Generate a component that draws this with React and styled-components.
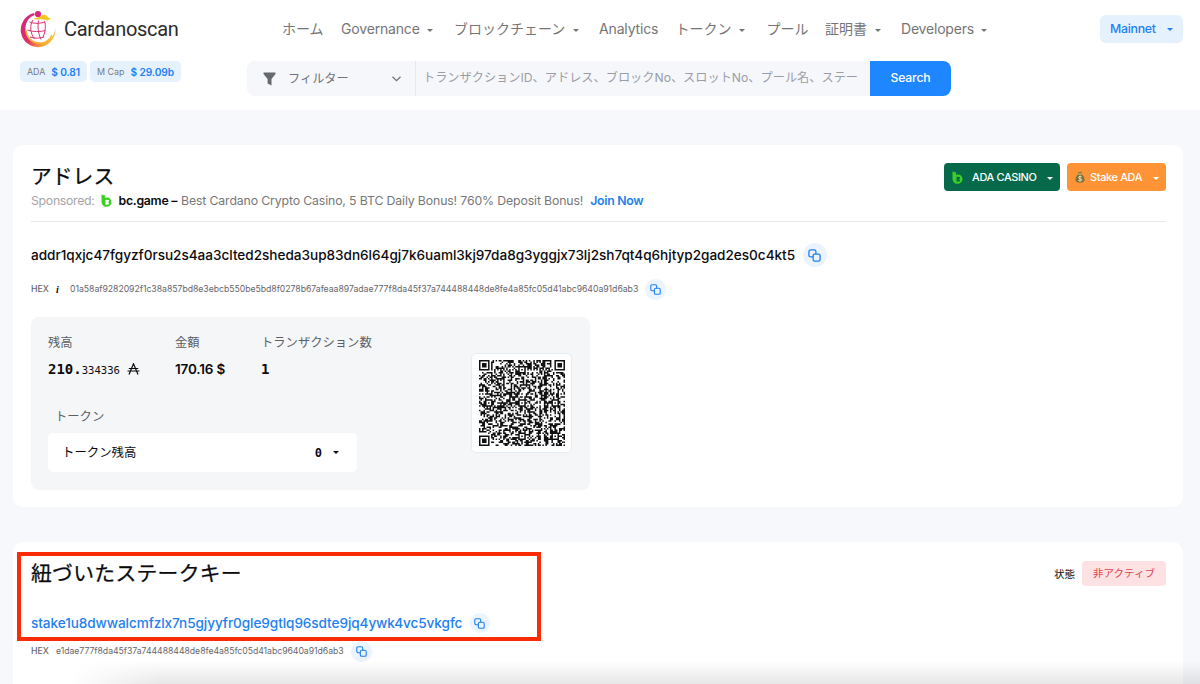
import React from 'react'
import styled, { createGlobalStyle, css } from 'styled-components'

const GlobalStyle = createGlobalStyle`
  * {
    box-sizing: border-box;
  }
  body {
    margin: 0;
    height: 684px;
    overflow: hidden;
    background: #f6f8fb;
    color: #0b0b0f;
    font-family: Inter, 'Noto Sans CJK JP', sans-serif;
    font-size: 14px;
  }
`

const Page = styled.div`
  position: relative;
  height: 684px;
  overflow: hidden;
`

const Header = styled.header`
  height: 110px;
  padding: 0 17px 0 20px;
  background: #ffffff;
`

const TopBar = styled.div`
  display: flex;
  align-items: center;
  height: 58px;
`

const Brand = styled.a`
  display: flex;
  align-items: center;
  gap: 7px;
  width: 262px;
  font-family: Roboto, sans-serif;
  font-size: 20px;
  letter-spacing: -.3px;
  color: #2b2b2d;
`

const Nav = styled.nav`
  display: grid;
  grid-template-columns: 59px 113px 145px 76.5px 91px 58.5px 76px 90px;
  flex: 1;
  color: #757575;
`

const NavItem = styled.a`
  display: flex;
  align-items: center;
  gap: 7.5px;
  line-height: 20px;
  white-space: nowrap;
  letter-spacing: ${props => props.$spacing || 0}px;
`

const Caret = styled.i`
  border: 3px solid transparent;
  border-top-color: currentColor;
  border-bottom: 0;
  margin-top: 2px;
`

const Network = styled.button`
  display: flex;
  align-items: center;
  justify-content: space-between;
  width: 83px;
  height: 28px;
  padding: 0 10px 1px;
  border: 0;
  border-radius: 6px;
  background: #e6f1fe;
  color: #2180f3;
  font: 500 12.3px Inter, sans-serif;
  letter-spacing: -.25px;
`

const SubBar = styled.div`
  display: flex;
  align-items: flex-start;
  padding-top: 3px;
`

const Chips = styled.div`
  display: flex;
  gap: 3px;
  width: 227px;
`

const Chip = styled.div`
  display: flex;
  align-items: center;
  justify-content: space-between;
  width: ${props => props.$width}px;
  height: 21px;
  padding: 0 7px;
  border-radius: 5px;
  background: #e6f1fe;
  color: #767b83;
  font-size: 8.9px;
  white-space: nowrap;
  b {
    color: #2180f3;
    font-size: 10.2px;
    font-weight: 600;
    letter-spacing: -.1px;
  }
`

const SearchForm = styled.form`
  display: flex;
  width: 704px;
  height: 35px;
  border-radius: 8px;
  overflow: hidden;
  background: #f6f7fa;
  font-size: 12.2px;
  line-height: 34px;
`

const Filter = styled.div`
  display: flex;
  align-items: center;
  width: 169px;
  padding: 0 14px 0 16px;
  border-right: 1px solid #e6e8ec;
  color: #707378;
  span {
    flex: 1;
    padding-left: 12px;
  }
`

const Placeholder = styled.div`
  flex: 1;
  padding-left: 7px;
  white-space: nowrap;
  color: #9a9da8;
`

const SearchButton = styled.button`
  width: 81px;
  padding-bottom: 3px;
  border: 0;
  background: #1e87ff;
  color: #ffffff;
  font: 500 12.2px Inter, sans-serif;
  letter-spacing: -.15px;
`

const Card = styled.section`
  height: ${props => props.$height}px;
  margin: 35px 17px 0 13px;
  padding: 17px 17px 0 18px;
  border-radius: 10px;
  background: #ffffff;
`

const CardHead = styled.div`
  display: flex;
  justify-content: space-between;
  align-items: flex-start;
`

const AddressHead = styled(CardHead)`
  height: 60px;
  border-bottom: 1px solid #e7e7e9;
`

const Title = styled.h1`
  margin: 0;
  font-size: 20.8px;
  font-weight: 400;
  line-height: 30px;
  height: 28px;
  letter-spacing: ${props => props.$spacing || 0}px;
  -webkit-text-stroke: .25px currentColor;
`

const Sponsor = styled.div`
  display: flex;
  align-items: center;
  height: 21px;
  font-size: 12.3px;
  letter-spacing: -.14px;
  white-space: pre;
  color: #777777;
  svg {
    margin: 0 7px 0 6px;
  }
`

const Muted = styled.span`
  letter-spacing: -.3px;
  color: #a5a5a7;
`

const Strong = styled.b`
  margin-right: 4px;
  color: #0b0b0f;
  font-weight: 600;
  letter-spacing: -.3px;
`

const Join = styled.a`
  margin-left: 7px;
  color: #1e80f0;
  font-weight: 600;
  letter-spacing: -.3px;
`

const Actions = styled.div`
  display: flex;
  gap: 7px;
`

const Action = styled.button`
  display: flex;
  align-items: center;
  width: ${props => props.$width}px;
  height: 28px;
  margin-top: 1px;
  padding: 0 7px 0 8px;
  border: 0;
  border-radius: 4px;
  background: ${props => props.$color};
  color: #ffffff;
  font: 500 10.9px Inter, sans-serif;
  letter-spacing: -.33px;
  white-space: nowrap;
  span {
    flex: 1;
    text-align: left;
    padding-left: ${props => props.$gap}px;
  }
`

const AddressRow = styled.div`
  display: flex;
  align-items: center;
  gap: 7.5px;
  height: 28px;
  margin-top: ${props => props.$top}px;
  font-size: 13.6px;
  font-weight: 500;
  white-space: nowrap;
  ${props => props.$link && css`
    color: #1e80f0;
  `}
`

const Hash = styled.span`
  letter-spacing: ${props => props.$spacing}px;
`

const HexRow = styled.div`
  display: flex;
  align-items: center;
  height: 22px;
  margin-top: ${props => props.$top}px;
  font-size: 8.7px;
  color: #66666a;
  white-space: nowrap;
`

const HexLabel = styled.span`
  width: ${props => props.$width}px;
  font-weight: 500;
`

const Info = styled.i`
  width: 14px;
  color: #0b0b0f;
  font: italic bold 10px 'Liberation Serif', serif;
`

const CopyButton = styled.button`
  display: grid;
  place-items: center;
  width: ${props => props.$size}px;
  height: ${props => props.$size}px;
  padding: 0;
  border: 0;
  border-radius: 50%;
  background: #eaf3fe;
  color: #1e80f0;
`

const HexCopy = styled(CopyButton)`
  margin-left: 7px;
`

const Panel = styled.div`
  display: flex;
  justify-content: space-between;
  width: 559px;
  height: 173px;
  margin-top: 17px;
  padding: 15px 18px 0 17px;
  border-radius: 8px;
  background: #f5f6f8;
`

const Stats = styled.div`
  display: grid;
  grid-template-columns: 127px 86px 120px;
`

const Label = styled.div`
  height: 20px;
  line-height: 22px;
  font-size: 12.3px;
  color: #5c5e63;
  white-space: nowrap;
`

const Value = styled.div`
  height: 20px;
  margin-top: 7px;
  line-height: 20px;
  font-size: 13.5px;
  font-weight: 600;
  letter-spacing: -.15px;
  white-space: nowrap;
`

const Mono = styled(Value)`
  display: flex;
  align-items: center;
  font-family: 'DejaVu Sans Mono', monospace;
  font-size: 14px;
  font-weight: 700;
  letter-spacing: 0;
  small {
    padding-top: 2px;
    font-size: 10.6px;
    font-weight: 400;
  }
  svg {
    margin-left: 7px;
  }
`

const TokenLabel = styled(Label)`
  margin: 27px 0 7px 7px;
`

const TokenSelect = styled.div`
  display: flex;
  align-items: center;
  width: 309px;
  height: 39px;
  padding: 0 18px 2px 14px;
  border-radius: 5px;
  background: #ffffff;
  font-size: 12.4px;
  span {
    flex: 1;
  }
  b {
    padding: 3px 11px 0 0;
    font: bold 12px 'DejaVu Sans Mono', monospace;
  }
`

const QrBox = styled.div`
  display: grid;
  place-items: center;
  width: 101px;
  height: 100px;
  margin-top: 21px;
  border: 1px solid #e3edf6;
  border-radius: 5px;
  background: #ffffff;
`

const Status = styled.div`
  display: flex;
  align-items: center;
  gap: 7px;
  height: 25px;
  margin-top: 2px;
  font-size: 10.5px;
`

const Badge = styled.span`
  width: 84px;
  height: 25px;
  border-radius: 4px;
  background: #fee1e3;
  color: #dc4450;
  line-height: 25px;
  text-align: center;
`

const Highlight = styled.div`
  position: absolute;
  left: 17px;
  top: 552px;
  width: 524px;
  height: 89px;
  border: 4px solid #f92c06;
`

const BottomShade = styled.div`
  position: absolute;
  left: 70px;
  right: 0;
  bottom: 0;
  height: 24px;
  background: linear-gradient(to bottom, rgba(0, 0, 0, 0), rgba(0, 0, 0, .09));
  mask-image: linear-gradient(to right, transparent, black 90px);
`

const ADDRESS = 'addr1qxjc47fgyzf0rsu2s4aa3clted2sheda3up83dn6l64gj7k6uaml3kj97da8g3yggjx73lj2sh7qt4q6hjtyp2gad2es0c4kt5'
const ADDRESS_HEX = '01a58af9282092f1c38a857bd8e3ebcb550be5bd8f0278b67afeaa897adae777f8da45f37a744488448de8fe4a85fc05d41abc9640a91d6ab3'
const STAKE = 'stake1u8dwwalcmfzlx7n5gjyyfr0gle9gtlq96sdte9jq4ywk4vc5vkgfc'
const STAKE_HEX = 'e1dae777f8da45f37a744488448de8fe4a85fc05d41abc9640a91d6ab3'

const NAV = [
  { text: 'ホーム' },
  { text: 'Governance', menu: true, spacing: -.17 },
  { text: 'ブロックチェーン', menu: true },
  { text: 'Analytics', spacing: -.15 },
  { text: 'トークン', menu: true },
  { text: 'プール' },
  { text: '証明書', menu: true },
  { text: 'Developers', menu: true, spacing: -.2 }
]

// QR code, version 10, error correction level H
const QR_SIZE = 57
const QR_MASK = 1
const MASKS = [
  (r, c) => (r + c) % 2,
  (r) => r % 2,
  (r, c) => c % 3,
  (r, c) => (r + c) % 3,
  (r, c) => (Math.floor(r / 2) + Math.floor(c / 3)) % 2,
  (r, c) => (r * c) % 2 + (r * c) % 3,
  (r, c) => ((r * c) % 2 + (r * c) % 3) % 2,
  (r, c) => ((r + c) % 2 + (r * c) % 3) % 2
]

const multiply = (x, y) => {
  let z = 0
  for (let i = 7; i >= 0; i--) {
    z = (z << 1) ^ ((z >>> 7) * 0x11d)
    z ^= ((y >>> i) & 1) * x
  }
  return z
}

const generator = (degree) => {
  const result = Array(degree).fill(0)
  result[degree - 1] = 1
  let root = 1
  for (let i = 0; i < degree; i++) {
    for (let j = 0; j < degree; j++) {
      result[j] = multiply(result[j], root)
      if (j + 1 < degree) result[j] ^= result[j + 1]
    }
    root = multiply(root, 2)
  }
  return result
}

const errorWords = (data, divisor) => {
  const result = divisor.map(() => 0)
  data.forEach(byte => {
    const factor = byte ^ result.shift()
    result.push(0)
    divisor.forEach((coef, i) => { result[i] ^= multiply(coef, factor) })
  })
  return result
}

const codewords = (text) => {
  let bits = '0100' + text.length.toString(2).padStart(16, '0')
  for (const ch of text) bits += ch.charCodeAt(0).toString(2).padStart(8, '0')
  bits += '0000'
  const data = bits.match(/.{8}/g).map(b => parseInt(b, 2))
  for (let pad = 0xec; data.length < 122; pad ^= 0xec ^ 0x11) data.push(pad)

  const divisor = generator(28)
  const blocks = [15, 15, 15, 15, 15, 15, 16, 16].map(n => data.splice(0, n))
  const errors = blocks.map(block => errorWords(block, divisor))
  const result = []
  for (let i = 0; i < 16; i++) blocks.forEach(b => i < b.length && result.push(b[i]))
  for (let i = 0; i < 28; i++) errors.forEach(e => result.push(e[i]))
  return result
}

const buildQr = (text, mask) => {
  const grid = Array.from({ length: QR_SIZE }, () => Array(QR_SIZE).fill(null))
  const set = (r, c, dark) => {
    if (r >= 0 && c >= 0 && r < QR_SIZE && c < QR_SIZE) grid[r][c] = dark ? 1 : 0
  }
  for (let i = 0; i < QR_SIZE; i++) {
    set(6, i, i % 2 === 0)
    set(i, 6, i % 2 === 0)
  }
  for (const [y, x] of [[3, 3], [3, 53], [53, 3]]) {
    for (let dy = -4; dy <= 4; dy++) {
      for (let dx = -4; dx <= 4; dx++) {
        const d = Math.max(Math.abs(dy), Math.abs(dx))
        set(y + dy, x + dx, d !== 2 && d !== 4)
      }
    }
  }
  for (const [y, x] of [[6, 28], [28, 6], [28, 28], [28, 50], [50, 28], [50, 50]]) {
    for (let dy = -2; dy <= 2; dy++) {
      for (let dx = -2; dx <= 2; dx++) set(y + dy, x + dx, Math.max(Math.abs(dy), Math.abs(dx)) !== 1)
    }
  }

  const format = (2 << 3) | mask
  let rem = format
  for (let i = 0; i < 10; i++) rem = (rem << 1) ^ ((rem >>> 9) * 0x537)
  const info = ((format << 10) | rem) ^ 0x5412
  const bit = i => (info >>> i) & 1
  for (let i = 0; i < 6; i++) set(i, 8, bit(i))
  set(7, 8, bit(6))
  set(8, 8, bit(7))
  set(8, 7, bit(8))
  for (let i = 9; i < 15; i++) set(8, 14 - i, bit(i))
  for (let i = 0; i < 8; i++) set(8, QR_SIZE - 1 - i, bit(i))
  for (let i = 8; i < 15; i++) set(QR_SIZE - 15 + i, 8, bit(i))
  set(QR_SIZE - 8, 8, 1)
  for (let i = 0; i < 18; i++) {
    const dark = (0x0a4d3 >>> i) & 1
    const a = QR_SIZE - 11 + i % 3
    const b = Math.floor(i / 3)
    set(a, b, dark)
    set(b, a, dark)
  }

  const words = codewords(text)
  let i = 0
  for (let right = QR_SIZE - 1; right >= 1; right -= 2) {
    if (right === 6) right = 5
    for (let v = 0; v < QR_SIZE; v++) {
      for (let j = 0; j < 2; j++) {
        const c = right - j
        const r = ((right + 1) & 2) === 0 ? QR_SIZE - 1 - v : v
        if (grid[r][c] === null) {
          const dark = i < words.length * 8 ? (words[i >>> 3] >>> (7 - (i & 7))) & 1 : 0
          grid[r][c] = dark ^ (MASKS[mask](r, c) === 0 ? 1 : 0)
          i++
        }
      }
    }
  }
  return grid
}

const QrCode = ({ text }) => {
  const path = buildQr(text, QR_MASK)
    .flatMap((row, r) => row.map((dark, c) => dark ? `M${c} ${r}h1v1h-1z` : ''))
    .join('')
  return (
    <svg width='86' height='86' viewBox='0 0 57 57'>
      <path d={path} fill='#111' />
    </svg>
  )
}

const Logo = () => (
  <svg width='37' height='38' viewBox='0 0 37 38' fill='none'>
    <defs>
      <linearGradient id='ring' x1='4' y1='8' x2='34' y2='28' gradientUnits='userSpaceOnUse'>
        <stop offset='0' stopColor='#d5277e' />
        <stop offset='.45' stopColor='#e02f6c' />
        <stop offset='.8' stopColor='#f59a35' />
        <stop offset='1' stopColor='#f8c13c' />
      </linearGradient>
    </defs>
    <path d='M14 3A17.300 17.300 0 1 0 35.300 18.500C34.500 27 28 32.800 20.500 32.600C11.500 32.300 5.500 26.500 5.500 18.500C5.500 12 9 7 14.800 5z' fill='url(#ring)' />
    <path d='M6 20A13.500 13.500 0 0 0 32 25' stroke='#f9b52f' strokeWidth='1.400' />
    <path d='M20 6.500C23 3.500 26.500 4.500 28 7.500L31 8.500L27.500 10.500C24.500 9.500 22 9 19.500 9.500L13 9z' fill='#f9c51d' />
    <path d='M9.500 12C14 13.800 20 13.800 25 12M7.500 20C13 22 20 22 25.500 20.500M10 27C15 28.500 20 28.500 24 27M13 10C9.500 15 10 23 14.500 29M18.500 10.500C17.500 16 18 23 21 29.500M24.500 11C26 15 25.500 22 23 27' stroke='#dd3275' strokeWidth='1' />
    <circle cx='18' cy='4' r='3.100' fill='#d5277e' />
  </svg>
)

const BcIcon = ({ width = 11 }) => (
  <svg width={width} height={width * 13 / 11} viewBox='0 0 11 13'>
    <path d='M.5.5L4 1.500V4C7 2.500 10.500 4.500 10.500 8C10.500 11 8 12.800 5.500 12.800C2.500 12.800.5 10.500.5 7.500zM4.500 5.800V10.700L8 10.200V8.900L6.700 8.300L8 7.600V6z' fill='#3bd023' fillRule='evenodd' />
  </svg>
)

const CopyIcon = ({ size }) => (
  <svg width={size} height={size} viewBox='0 0 14 14' fill='none' stroke='currentColor' strokeWidth='1.400'>
    <rect x='5.500' y='5.500' width='7.500' height='7.500' rx='1.700' />
    <path d='M5.500 8.500H2.700A1.700 1.700 0 0 1 1 6.800V2.700A1.700 1.700 0 0 1 2.700 1H6.800A1.700 1.700 0 0 1 8.500 2.700V5.500' />
  </svg>
)

const FilterIcon = () => (
  <svg width='13' height='14' viewBox='0 0 13 14'>
    <path d='M.7.500H12.300Q13 1.300 12.300 2.200L8.500 7V13.500L4.600 11.500V7L.7 2.200Q0 1.300.7.500z' fill='#66696e' />
  </svg>
)

const Chevron = () => (
  <svg width='9' height='6' viewBox='0 0 9 6' fill='none' stroke='#707378' strokeWidth='1.300'>
    <path d='M.5.700L4.500 4.700L8.500.700' />
  </svg>
)

const AdaIcon = () => (
  <svg width='13' height='12' viewBox='0 0 13 12' fill='none' stroke='#0b0b0f' strokeWidth='1.200'>
    <path d='M2 11.500L6.500 .8L11 11.500M1.800 5.500H11.200M.5 8H12.500' />
  </svg>
)

const MoneyBag = () => (
  <svg width='10' height='12' viewBox='0 0 10 12'>
    <path d='M3 .7L5 1.300L7 .5L6.300 3C8.500 4.500 9.800 7 9.500 9.300Q9.300 11.700 5 11.700Q.7 11.700.5 9.300C.2 7 1.500 4.500 3.700 3z' fill='#7d7340' />
    <path d='M3.500 3H6.500' stroke='#e5c878' />
    <path d='M6.600 5.800C5.500 5 3.600 5.300 3.600 6.500S6.600 7.500 6.600 8.800S4.500 10.200 3.300 9.300M5 4.700V10.500' fill='none' stroke='#f7e9b8' strokeWidth='.9' />
  </svg>
)

const App = () => (
  <Page>
    <GlobalStyle />
    <Header>
      <TopBar>
        <Brand><Logo />Cardanoscan</Brand>
        <Nav>
          {NAV.map(item => (
            <NavItem key={item.text} $spacing={item.spacing}>
              {item.text}
              {item.menu && <Caret />}
            </NavItem>
          ))}
        </Nav>
        <Network>Mainnet<Caret /></Network>
      </TopBar>
      <SubBar>
        <Chips>
          <Chip $width={67}>ADA <b>$ 0.81</b></Chip>
          <Chip $width={91}>M Cap <b>$ 29.09b</b></Chip>
        </Chips>
        <SearchForm>
          <Filter><FilterIcon /><span>フィルター</span><Chevron /></Filter>
          <Placeholder>トランザクションID、アドレス、ブロックNo、スロットNo、プール名、ステー</Placeholder>
          <SearchButton type='button'>Search</SearchButton>
        </SearchForm>
      </SubBar>
    </Header>

    <Card $height={362}>
      <AddressHead>
        <div>
          <Title>アドレス</Title>
          <Sponsor>
            <Muted>Sponsored:</Muted>
            <BcIcon />
            <Strong>bc.game –</Strong>
            <span>Best Cardano Crypto Casino, 5 BTC Daily Bonus! 760% Deposit Bonus!</span>
            <Join>Join Now</Join>
          </Sponsor>
        </div>
        <Actions>
          <Action $width={116} $gap={9} $color='#05694a'><BcIcon /><span>ADA CASINO</span><Caret /></Action>
          <Action $width={99} $gap={5} $color='#ff9436'><MoneyBag /><span>Stake ADA</span><Caret /></Action>
        </Actions>
      </AddressHead>
      <AddressRow $top={19}>
        <Hash $spacing={-.03}>{ADDRESS}</Hash>
        <CopyButton $size={24}><CopyIcon size={13} /></CopyButton>
      </AddressRow>
      <HexRow $top={9}>
        <HexLabel $width={25}>HEX</HexLabel>
        <Info>i</Info>
        <Hash $spacing={-.03}>{ADDRESS_HEX}</Hash>
        <HexCopy $size={21}><CopyIcon size={11} /></HexCopy>
      </HexRow>
      <Panel>
        <div>
          <Stats>
            <div>
              <Label>残高</Label>
              <Mono>210.<small>334336</small><AdaIcon /></Mono>
            </div>
            <div>
              <Label>金額</Label>
              <Value>170.16 $</Value>
            </div>
            <div>
              <Label>トランザクション数</Label>
              <Mono>1</Mono>
            </div>
          </Stats>
          <TokenLabel>トークン</TokenLabel>
          <TokenSelect><span>トークン残高</span><b>0</b><Caret /></TokenSelect>
        </div>
        <QrBox><QrCode text={ADDRESS} /></QrBox>
      </Panel>
    </Card>

    <Card $height={200}>
      <CardHead>
        <Title $spacing={.3}>紐づいたステークキー</Title>
        <Status>状態<Badge>非アクティブ</Badge></Status>
      </CardHead>
      <AddressRow $top={22} $link>
        <Hash $spacing={-.085}>{STAKE}</Hash>
        <CopyButton $size={20}><CopyIcon size={11} /></CopyButton>
      </AddressRow>
      <HexRow $top={3}>
        <HexLabel $width={25}>HEX</HexLabel>
        <Hash $spacing={-.04}>{STAKE_HEX}</Hash>
        <HexCopy $size={21}><CopyIcon size={11} /></HexCopy>
      </HexRow>
    </Card>
    <BottomShade />
    <Highlight />
  </Page>
)

export default App
